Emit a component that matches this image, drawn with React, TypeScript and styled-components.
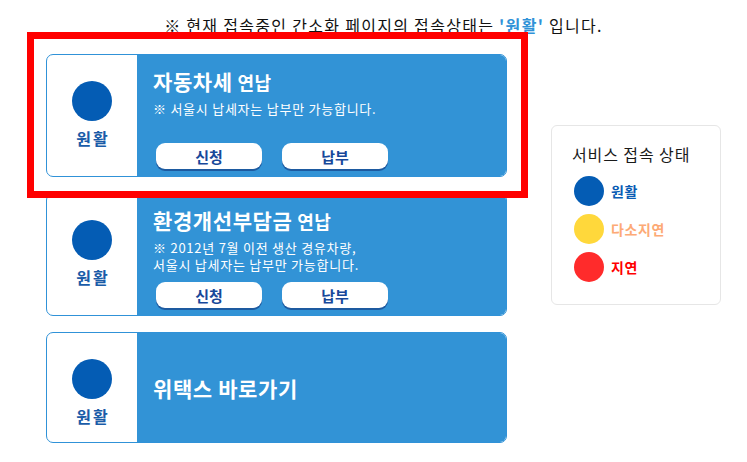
import React from "react";
import styled, { createGlobalStyle } from "styled-components";

const GlobalStyle = createGlobalStyle`
  html, body {
    margin: 0;
    padding: 0;
    background: #ffffff;
    font-family: "Noto Sans CJK KR", "Noto Sans", sans-serif;
  }
`;

const Page = styled.div`
  position: relative;
  width: 675px;
  padding: 13px 0 0 46px;
`;

const Notice = styled.p`
  margin: 0;
  text-align: center;
  font-size: 16px;
  line-height: 24px;
  letter-spacing: 1.3px;
  color: #111111;
`;

const Strong = styled.b`
  color: #3092d8;
  font-weight: 700;
`;

const Row = styled.div`
  display: flex;
  align-items: flex-start;
  gap: 44px;
  margin-top: 17px;
`;

const CardList = styled.div`
  display: flex;
  flex-direction: column;
  gap: 16px;
  width: 461px;
`;

const Card = styled.div<{ $height: number }>`
  display: flex;
  height: ${(p) => p.$height}px;
  box-sizing: border-box;
  border: 1px solid #3092d8;
  border-radius: 7px;
  overflow: hidden;
  background: #ffffff;
`;

const StatusCell = styled.div`
  display: flex;
  flex-direction: column;
  align-items: center;
  width: 90px;
  flex-shrink: 0;
  padding-top: 26px;
  box-sizing: border-box;
`;

const Dot = styled.span<{ $color: string; $size: number }>`
  display: block;
  width: ${(p) => p.$size}px;
  height: ${(p) => p.$size}px;
  border-radius: 50%;
  background: ${(p) => p.$color};
  flex-shrink: 0;
`;

const StatusText = styled.span`
  margin-top: 7px;
  padding-left: 2px;
  font-size: 16px;
  line-height: 20px;
  font-weight: 700;
  letter-spacing: 2px;
  color: #1a5ca8;
`;

const Body = styled.div<{ $center?: boolean }>`
  flex: 1;
  display: flex;
  flex-direction: column;
  justify-content: ${(p) => (p.$center ? "center" : "flex-start")};
  padding: ${(p) => (p.$center ? "0 16px" : "13px 16px 0")};
  background: #3293d6;
  color: #ffffff;
`;

const Title = styled.h2`
  margin: 0;
  font-size: 21px;
  line-height: 26px;
  font-weight: 700;
  letter-spacing: 0.6px;
`;

const TitleSmall = styled.span`
  font-size: 18px;
`;

const Desc = styled.p`
  margin: 5px 0 0;
  min-height: 34px;
  font-size: 13px;
  line-height: 17px;
  letter-spacing: 0.75px;
`;

const Buttons = styled.div`
  display: flex;
  gap: 20px;
  margin: 9px 0 0 3px;
`;

const Button = styled.button`
  width: 106px;
  height: 26px;
  padding: 0;
  border: none;
  border-radius: 9px;
  background: #ffffff;
  box-shadow: 0 2px 0 #1d5aa0;
  font-family: inherit;
  font-size: 15px;
  font-weight: 700;
  color: #17489a;
  cursor: pointer;
`;

const Legend = styled.div`
  margin-top: 71px;
  width: 170px;
  height: 180px;
  box-sizing: border-box;
  padding: 16px 0 0 20px;
  border: 1px solid #e6e6e6;
  border-radius: 6px;
`;

const LegendTitle = styled.div`
  font-size: 16px;
  line-height: 24px;
  letter-spacing: 0.9px;
  color: #1a1a1a;
`;

const LegendList = styled.ul`
  list-style: none;
  margin: 10px 0 0;
  padding: 0 0 0 2px;
  display: flex;
  flex-direction: column;
  gap: 8px;
`;

const LegendItem = styled.li`
  display: flex;
  align-items: center;
  gap: 7px;
`;

const LegendLabel = styled.span<{ $color: string }>`
  font-size: 14px;
  font-weight: 700;
  letter-spacing: 0.6px;
  color: ${(p) => p.$color};
`;

const Highlight = styled.div`
  position: absolute;
  left: 27px;
  top: 32px;
  width: 501px;
  height: 166px;
  box-sizing: border-box;
  border: 7px solid #ff0000;
  pointer-events: none;
`;

type Service = {
  title: string;
  suffix?: string;
  desc?: string[];
  buttons?: boolean;
};

const services: Service[] = [
  {
    title: "자동차세",
    suffix: "연납",
    desc: ["※ 서울시 납세자는 납부만 가능합니다."],
    buttons: true,
  },
  {
    title: "환경개선부담금",
    suffix: "연납",
    desc: ["※ 2012년 7월 이전 생산 경유차량,", "서울시 납세자는 납부만 가능합니다."],
    buttons: true,
  },
  { title: "위택스 바로가기" },
];

const legend = [
  { label: "원활", dot: "#045cb4", text: "#0a5cb4" },
  { label: "다소지연", dot: "#ffd83b", text: "#fdaa76" },
  { label: "지연", dot: "#ff2b2b", text: "#ff0000" },
];

export default function App() {
  return (
    <>
      <GlobalStyle />
      <Page>
        <Notice>
          ※ 현재 접속중인 간소화 페이지의 접속상태는 <Strong>'원활'</Strong> 입니다.
        </Notice>
        <Row>
          <CardList>
            {services.map((s, i) => (
              <Card key={i} $height={s.buttons ? 123 : 111}>
                <StatusCell>
                  <Dot $color="#045cb4" $size={40} />
                  <StatusText>원활</StatusText>
                </StatusCell>
                <Body $center={!s.buttons}>
                  <Title>
                    {s.title}
                    {s.suffix && <TitleSmall> {s.suffix}</TitleSmall>}
                  </Title>
                  {s.desc && (
                    <Desc>
                      {s.desc.map((line, j) => (
                        <React.Fragment key={j}>
                          {j > 0 && <br />}
                          {line}
                        </React.Fragment>
                      ))}
                    </Desc>
                  )}
                  {s.buttons && (
                    <Buttons>
                      <Button>신청</Button>
                      <Button>납부</Button>
                    </Buttons>
                  )}
                </Body>
              </Card>
            ))}
          </CardList>
          <Legend>
            <LegendTitle>서비스 접속 상태</LegendTitle>
            <LegendList>
              {legend.map((l) => (
                <LegendItem key={l.label}>
                  <Dot $color={l.dot} $size={30} />
                  <LegendLabel $color={l.text}>{l.label}</LegendLabel>
                </LegendItem>
              ))}
            </LegendList>
          </Legend>
        </Row>
        <Highlight />
      </Page>
    </>
  );
}
